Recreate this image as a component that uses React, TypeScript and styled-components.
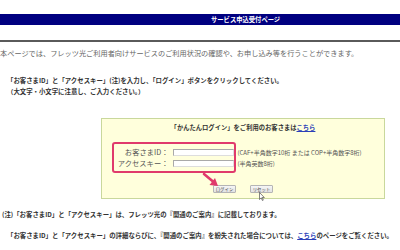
import { createGlobalStyle, styled } from 'styled-components';

const GlobalStyle = createGlobalStyle`
  html, body {
    margin: 0;
    padding: 0;
    background: #fff;
  }
  body {
    font-family: "Noto Sans CJK JP", "Noto Sans", sans-serif;
  }
`;

const Page = styled.div`
  width: 400px;
  height: 250px;
  overflow: hidden;
  padding-top: 14px;
  box-sizing: border-box;
  background: #fff;
`;

const HeaderBar = styled.div`
  height: 11px;
  background: #000080;
  color: #fff;
  font-size: 6.3px;
  font-weight: 700;
  display: flex;
  align-items: center;
  padding-left: 211px;
  white-space: nowrap;
`;

const Rule = styled.div`
  margin-top: 15px;
  height: 1.5px;
  background: #5a5a5a;
`;

const Intro = styled.p`
  margin: 6px 0 0;
  font-size: 7.2px;
  line-height: 10px;
  color: #666;
  white-space: nowrap;
`;

const Note = styled.p<{ indent?: number; top?: number }>`
  margin: ${p => p.top ?? 0}px 0 0 ${p => p.indent ?? 0}px;
  font-size: 6.4px;
  line-height: 11px;
  font-weight: 700;
  color: #333;
  white-space: nowrap;
`;

const Link = styled.a`
  color: #2b3fb8;
  text-decoration: underline;
`;

const LoginBox = styled.div`
  position: relative;
  margin: 21.5px 0 0 101px;
  width: 284px;
  box-sizing: border-box;
  padding: 5px 0 5px 10px;
  background: #ffffdc;
  border: 1px solid #c9d89c;
`;

const BoxTitle = styled.div`
  margin-left: -10px;
  text-align: center;
  font-size: 6.3px;
  line-height: 8px;
  font-weight: 700;
  color: #333;
  white-space: nowrap;
`;

const FormArea = styled.div`
  margin-top: 10px;
  display: flex;
  align-items: stretch;
  gap: 2px;
`;

const Highlight = styled.div`
  border: 2.5px solid #e03a6c;
  border-radius: 3px;
  padding: 2.5px 0 2px;
  display: grid;
  grid-template-columns: 54.5px 61px;
  grid-auto-rows: 11px;
  column-gap: 4px;
  align-items: center;
`;

const Label = styled.span`
  font-size: 7.3px;
  color: #555;
  text-align: right;
  white-space: nowrap;
`;

const Field = styled.span`
  display: block;
  height: 7px;
  background: #fff;
  border: 1px solid #a9a9a9;
  border-right-color: #ddd;
  border-bottom-color: #ddd;
  box-sizing: border-box;
`;

const Hints = styled.div`
  padding-top: 4.5px;
  display: grid;
  grid-auto-rows: 11px;
  align-items: center;
`;

const Hint = styled.span`
  font-size: 6px;
  color: #555;
  white-space: nowrap;
`;

const Buttons = styled.div`
  margin: 12.5px 0 0 -10px;
  display: flex;
  justify-content: center;
  gap: 14px;
`;

const Button = styled.span`
  width: 23px;
  height: 7.5px;
  display: flex;
  align-items: center;
  justify-content: center;
  background: linear-gradient(#f6f6f6, #e2e2e2);
  border: 1px solid #b5b5b5;
  border-radius: 1px;
  box-sizing: border-box;
  font-size: 4.4px;
  color: #444;
  white-space: nowrap;
`;

const Overlay = styled.svg`
  position: absolute;
  pointer-events: none;
`;

export default function App() {
  return (
    <>
      <GlobalStyle />
      <Page>
        <HeaderBar>サービス申込受付ページ</HeaderBar>
        <Rule />
        <Intro>本ページでは、フレッツ光ご利用者向けサービスのご利用状況の確認や、お申し込み等を行うことができます。</Intro>
        <Note indent={7} top={17}>「お客さまID」と「アクセスキー」(注)を入力し、「ログイン」ボタンをクリックしてください。</Note>
        <Note indent={7}>（大文字・小文字に注意し、ご入力ください。）</Note>

        <LoginBox>
          <BoxTitle>
            「かんたんログイン」をご利用のお客さまは<Link>こちら</Link>
          </BoxTitle>
          <FormArea>
            <Highlight>
              <Label>お客さまID：</Label>
              <Field />
              <Label>アクセスキー：</Label>
              <Field />
            </Highlight>
            <Hints>
              <Hint>(CAF+半角数字10桁 または COP+半角数字8桁)</Hint>
              <Hint>(半角英数8桁)</Hint>
            </Hints>
          </FormArea>
          <Buttons>
            <Button>ログイン</Button>
            <Button>リセット</Button>
          </Buttons>

          {/* pink annotation arrow */}
          <Overlay width="20" height="18" viewBox="0 0 20 18" style={{ left: 100, top: 53 }}>
            <line x1="2" y1="2" x2="11" y2="9.5" stroke="#e03a6c" strokeWidth="2.6" strokeLinecap="round" />
            <polygon points="16,14 7.5,13 13,6" fill="#e03a6c" />
          </Overlay>

          {/* mouse cursor */}
          <Overlay width="6" height="9" viewBox="0 0 6 9" style={{ left: 157, top: 73 }}>
            <path d="M0.5 0.5 L0.5 7.5 L2.2 5.9 L3.4 8.5 L4.3 8.1 L3.2 5.5 L5.3 5.5 Z" fill="#fff" stroke="#333" strokeWidth="0.6" />
          </Overlay>
        </LoginBox>

        <Note indent={2} top={10.5}>(注)「お客さまID」と「アクセスキー」は、フレッツ光の『開通のご案内』に記載しております。</Note>
        <Note indent={7} top={10}>
          「お客さまID」と「アクセスキー」の詳細ならびに、『開通のご案内』を紛失された場合については、<Link>こちら</Link>のページをご覧ください。
        </Note>
      </Page>
    </>
  );
}
